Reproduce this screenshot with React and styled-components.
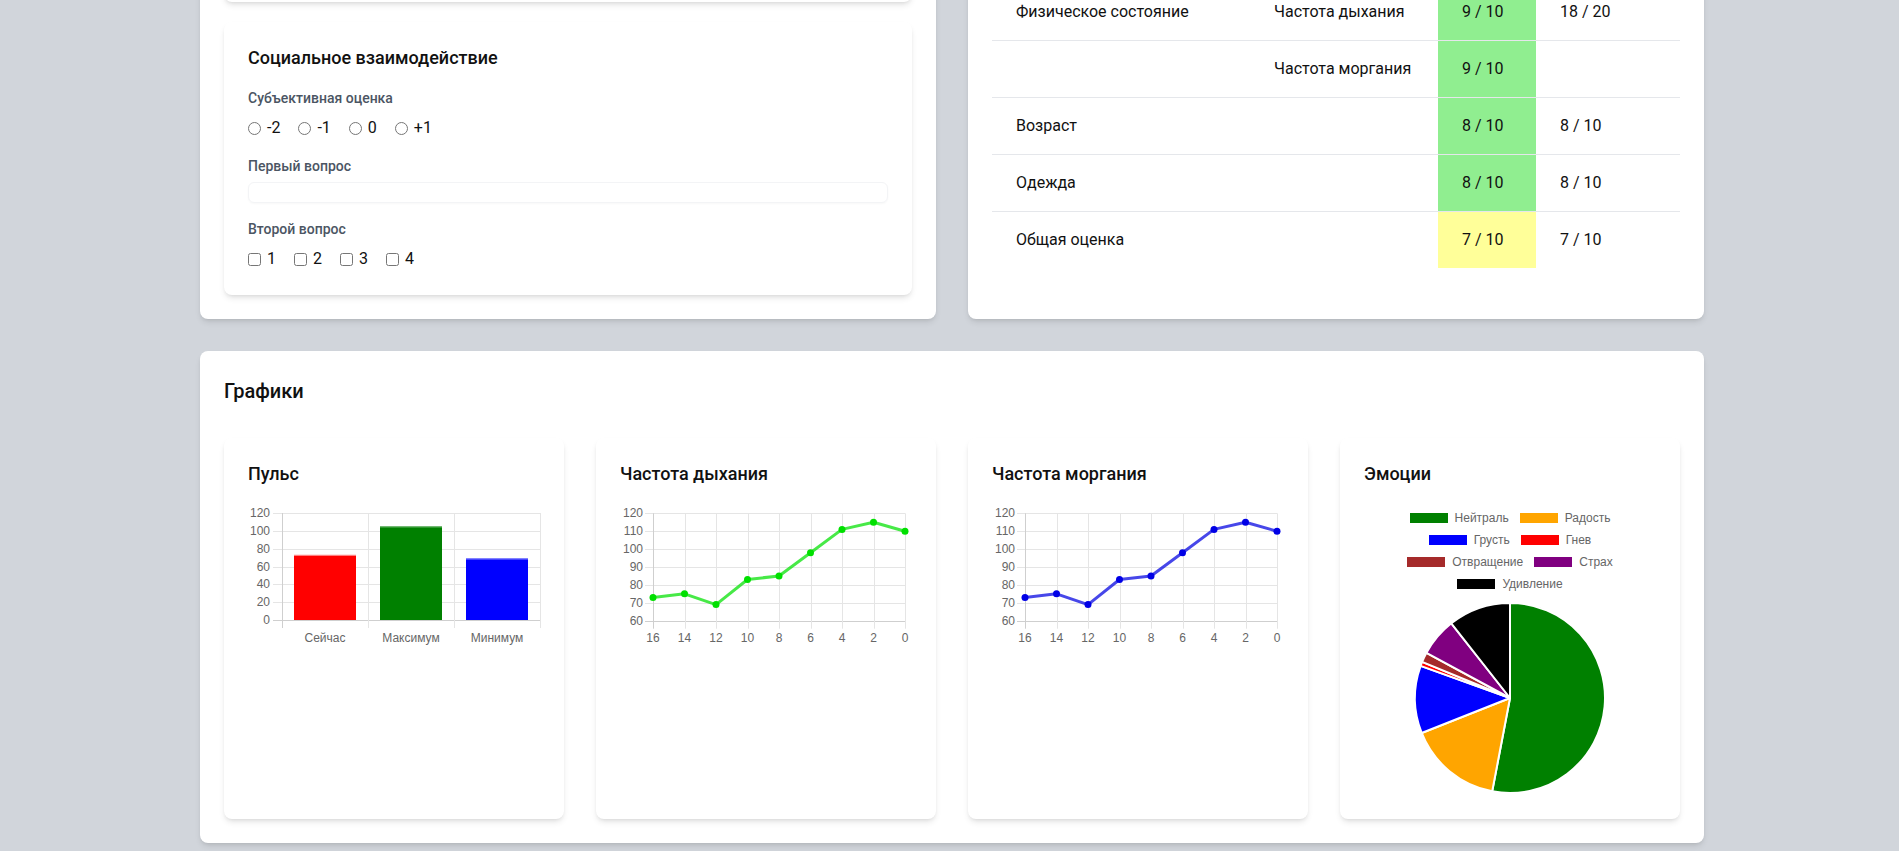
import React from "react";
import styled, { createGlobalStyle } from "styled-components";

const GlobalStyle = createGlobalStyle`
  body {
    margin: 0;
    background: #d1d5db;
    font-family: Roboto, "Noto Sans", sans-serif;
    color: #111827;
  }
`;

const shadow = "0 4px 6px -1px rgba(0, 0, 0, 0.1), 0 2px 4px -2px rgba(0, 0, 0, 0.1)";

const Page = styled.div`
  width: 1504px;
  margin: -40px 0 0 200px;
  padding-bottom: 32px;
  display: flex;
  flex-direction: column;
  gap: 32px;
`;

const TopGrid = styled.div`
  display: grid;
  grid-template-columns: 1fr 1fr;
  gap: 32px;
`;

const Panel = styled.section`
  background: #fff;
  border-radius: 8px;
  box-shadow: ${shadow};
  padding: 24px;
`;

const Stack = styled.div`
  display: flex;
  flex-direction: column;
  gap: 20px;
`;

const SubCard = styled.div`
  background: #fff;
  border-radius: 8px;
  box-shadow: ${shadow};
  padding: 24px;
  box-sizing: border-box;
`;

// the card above, scrolled out of view
const PrevCard = styled(SubCard)`
  height: 18px;
  padding: 0;
`;

const CardTitle = styled.h3`
  margin: 0 0 ${(p) => p.$gap || 18}px;
  font-size: 18px;
  font-weight: 500;
  line-height: 24px;
  color: #111;
`;

const Fields = styled.div`
  display: flex;
  flex-direction: column;
  gap: 16px;
`;

const FieldLabel = styled.div`
  font-size: 14px;
  font-weight: 500;
  line-height: 20px;
  color: #4b5563;
`;

const OptionRow = styled.div`
  display: flex;
  gap: 18px;
  margin-top: 8px;
  font-size: 16px;
  line-height: 24px;
  color: #111;
`;

const Option = styled.label`
  display: inline-flex;
  align-items: center;
  gap: 6px;

  input {
    margin: 0;
    width: 13px;
    height: 13px;
  }
`;

const TextBox = styled.div`
  margin-top: 6px;
  height: 21px;
  box-sizing: border-box;
  border: 1px solid #f3f4f6;
  border-radius: 6px;
  box-shadow: 0 1px 2px rgba(0, 0, 0, 0.03);
`;

const Table = styled.table`
  width: 100%;
  border-collapse: collapse;
  table-layout: fixed;
  font-size: 16px;
  color: #111;
`;

const Row = styled.tr`
  border-bottom: 1px solid #e5e7eb;

  &:last-child {
    border-bottom: none;
  }
`;

const Cell = styled.td`
  padding: 16px 24px;
  line-height: 24px;
  background: ${(p) => (p.$tone === "good" ? "#90ee90" : p.$tone === "mid" ? "#ffff99" : "transparent")};
`;

const SectionTitle = styled.h2`
  margin: 0 0 31px;
  font-size: 20px;
  font-weight: 500;
  line-height: 32px;
  color: #111;
`;

const ChartGrid = styled.div`
  display: grid;
  grid-template-columns: repeat(4, 1fr);
  gap: 32px;
`;

const ChartCard = styled(SubCard)`
  min-height: 381px;
`;

const ChartSvg = styled.svg`
  display: block;
  overflow: visible;
`;

const AxisText = styled.text`
  font-family: "Liberation Sans", Arial, sans-serif;
  font-size: 12px;
  fill: #666;
`;

const Legend = styled.div`
  margin-top: 21px;
  display: flex;
  flex-direction: column;
`;

const LegendRow = styled.div`
  display: flex;
  justify-content: center;
  gap: 11px;
  height: 22px;
  align-items: center;
`;

const LegendItem = styled.div`
  display: flex;
  align-items: center;
  gap: 7px;
  font-family: "Liberation Sans", Arial, sans-serif;
  font-size: 12px;
  color: #666;
`;

const Swatch = styled.span`
  width: 38px;
  height: 10px;
  background: ${(p) => p.$color};
`;

const PieWrap = styled.div`
  margin-top: 8px;
  display: flex;
  justify-content: center;
`;

const scores = [
  ["Физическое состояние", "Частота дыхания", "9 / 10", "good", "18 / 20"],
  ["", "Частота моргания", "9 / 10", "good", ""],
  ["Возраст", "", "8 / 10", "good", "8 / 10"],
  ["Одежда", "", "8 / 10", "good", "8 / 10"],
  ["Общая оценка", "", "7 / 10", "mid", "7 / 10"],
];

const pulse = [
  { label: "Сейчас", value: 73, color: "#ff0000", edge: "#ff8c8c" },
  { label: "Максимум", value: 105, color: "#008000", edge: "#7fbf7f" },
  { label: "Минимум", value: 69, color: "#0000ff", edge: "#8c8cff" },
];

const rateData = [73, 75, 69, 83, 85, 98, 111, 115, 110];
const rateLabels = [16, 14, 12, 10, 8, 6, 4, 2, 0];

const emotions = [
  { label: "Нейтраль", value: 53, color: "#008000" },
  { label: "Радость", value: 16, color: "#ffa500" },
  { label: "Грусть", value: 11.5, color: "#0000ff" },
  { label: "Гнев", value: 0.7, color: "#ff0000" },
  { label: "Отвращение", value: 1.7, color: "#a52a2a" },
  { label: "Страх", value: 6.5, color: "#800080" },
  { label: "Удивление", value: 10.6, color: "#000000" },
];
const legendRows = [[0, 1], [2, 3], [4, 5], [6]];

const px = (v) => Math.round(v) + 0.5;

function BarChart() {
  const top = 13;
  const bottom = 120;
  const left = 34;
  const right = 292;
  const y = (v) => bottom - (v / 120) * (bottom - top);
  const step = (right - left) / pulse.length;
  const ticks = [0, 20, 40, 60, 80, 100, 120];

  return (
    <ChartSvg width="292" height="150">
      {ticks.map((t) => (
        <line key={t} x1={25} x2={right} y1={px(y(t))} y2={px(y(t))} stroke={t === 0 ? "#cfcfcf" : "#e5e5e5"} />
      ))}
      {[0, 1, 2, 3].map((i) => (
        <line key={i} x1={px(left + i * step)} x2={px(left + i * step)} y1={top} y2={bottom + 8} stroke={i === 0 ? "#cfcfcf" : "#e5e5e5"} />
      ))}
      {ticks.map((t) => (
        <AxisText key={t} x={22} y={y(t) + 4} textAnchor="end">
          {t}
        </AxisText>
      ))}
      {pulse.map((b, i) => {
        const x = left + i * step + (step - 62) / 2;
        return (
          <g key={b.label}>
            <rect x={x} y={y(b.value)} width={62} height={bottom - y(b.value)} fill={b.color} />
            <rect x={x} y={y(b.value)} width={62} height={1} fill={b.edge} />
            <AxisText x={left + i * step + step / 2} y={142} textAnchor="middle">
              {b.label}
            </AxisText>
          </g>
        );
      })}
    </ChartSvg>
  );
}

function LineChart({ line, dot }) {
  const top = 13.3;
  const bottom = 120.7;
  const left = 33;
  const right = 285;
  const y = (v) => bottom - ((v - 60) / 60) * (bottom - top);
  const step = (right - left) / (rateData.length - 1);
  const ticks = [60, 70, 80, 90, 100, 110, 120];
  const points = rateData.map((v, i) => [left + i * step, y(v)]);

  return (
    <ChartSvg width="292" height="150">
      {ticks.map((t) => (
        <line key={t} x1={25} x2={right} y1={px(y(t))} y2={px(y(t))} stroke={t === 60 ? "#cfcfcf" : "#e5e5e5"} />
      ))}
      {rateLabels.map((l, i) => (
        <line key={l} x1={px(left + i * step)} x2={px(left + i * step)} y1={top} y2={bottom + 8} stroke={i === 0 ? "#cfcfcf" : "#e5e5e5"} />
      ))}
      {ticks.map((t) => (
        <AxisText key={t} x={23} y={y(t) + 4} textAnchor="end">
          {t}
        </AxisText>
      ))}
      {rateLabels.map((l, i) => (
        <AxisText key={l} x={left + i * step} y={142} textAnchor="middle">
          {l}
        </AxisText>
      ))}
      <polyline points={points.map((p) => p.join(",")).join(" ")} fill="none" stroke={line} strokeWidth="3" strokeLinejoin="round" />
      {points.map(([cx, cy], i) => (
        <circle key={i} cx={cx} cy={cy} r="3.5" fill={dot} />
      ))}
    </ChartSvg>
  );
}

function PieChart() {
  const r = 95;
  const c = 95;
  const total = emotions.reduce((s, e) => s + e.value, 0);
  let angle = -Math.PI / 2;

  return (
    <ChartSvg width="190" height="190">
      {emotions.map((e) => {
        const a0 = angle;
        const a1 = angle + (e.value / total) * Math.PI * 2;
        angle = a1;
        const large = a1 - a0 > Math.PI ? 1 : 0;
        const d = `M ${c} ${c} L ${c + r * Math.cos(a0)} ${c + r * Math.sin(a0)} A ${r} ${r} 0 ${large} 1 ${c + r * Math.cos(a1)} ${c + r * Math.sin(a1)} Z`;
        return <path key={e.label} d={d} fill={e.color} stroke="#fff" strokeWidth="2" strokeLinejoin="round" />;
      })}
    </ChartSvg>
  );
}

export default function App() {
  return (
    <>
      <GlobalStyle />
      <Page>
        <TopGrid>
          <Panel>
            <Stack>
              <PrevCard />
              <SubCard>
                <CardTitle>Социальное взаимодействие</CardTitle>
                <Fields>
                  <div>
                    <FieldLabel>Субъективная оценка</FieldLabel>
                    <OptionRow>
                      {["-2", "-1", "0", "+1"].map((v) => (
                        <Option key={v}>
                          <input type="radio" name="subjective" />
                          {v}
                        </Option>
                      ))}
                    </OptionRow>
                  </div>
                  <div>
                    <FieldLabel>Первый вопрос</FieldLabel>
                    <TextBox />
                  </div>
                  <div>
                    <FieldLabel>Второй вопрос</FieldLabel>
                    <OptionRow>
                      {["1", "2", "3", "4"].map((v) => (
                        <Option key={v}>
                          <input type="checkbox" />
                          {v}
                        </Option>
                      ))}
                    </OptionRow>
                  </div>
                </Fields>
              </SubCard>
            </Stack>
          </Panel>

          <Panel>
            <Table>
              <colgroup>
                <col style={{ width: 258 }} />
                <col style={{ width: 188 }} />
                <col style={{ width: 98 }} />
                <col style={{ width: 144 }} />
              </colgroup>
              <tbody>
                {scores.map(([name, metric, score, tone, total], i) => (
                  <Row key={i}>
                    <Cell>{name}</Cell>
                    <Cell>{metric}</Cell>
                    <Cell $tone={tone}>{score}</Cell>
                    <Cell>{total}</Cell>
                  </Row>
                ))}
              </tbody>
            </Table>
          </Panel>
        </TopGrid>

        <Panel>
          <SectionTitle>Графики</SectionTitle>
          <ChartGrid>
            <ChartCard>
              <CardTitle $gap={14}>Пульс</CardTitle>
              <BarChart />
            </ChartCard>
            <ChartCard>
              <CardTitle $gap={14}>Частота дыхания</CardTitle>
              <LineChart line="rgba(0, 225, 0, 0.72)" dot="#00e000" />
            </ChartCard>
            <ChartCard>
              <CardTitle $gap={14}>Частота моргания</CardTitle>
              <LineChart line="rgba(0, 0, 225, 0.72)" dot="#0000e6" />
            </ChartCard>
            <ChartCard>
              <CardTitle $gap={14}>Эмоции</CardTitle>
              <Legend>
                {legendRows.map((row, i) => (
                  <LegendRow key={i}>
                    {row.map((idx) => (
                      <LegendItem key={idx}>
                        <Swatch $color={emotions[idx].color} />
                        {emotions[idx].label}
                      </LegendItem>
                    ))}
                  </LegendRow>
                ))}
              </Legend>
              <PieWrap>
                <PieChart />
              </PieWrap>
            </ChartCard>
          </ChartGrid>
        </Panel>
      </Page>
    </>
  );
}
